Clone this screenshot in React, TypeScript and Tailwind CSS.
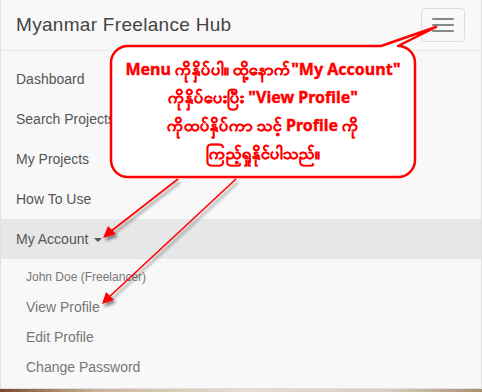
const navItems = ["Dashboard", "Search Projects", "My Projects", "How To Use"];
const accountItems = ["View Profile", "Edit Profile", "Change Password"];

function Callout() {
  return (
    <div className="pointer-events-none absolute inset-0">
      <svg width="482" height="392" className="absolute left-0 top-0">
        <defs>
          <filter id="shadow" x="-20%" y="-20%" width="140%" height="140%">
            <feDropShadow dx="2" dy="3" stdDeviation="1.5" floodColor="#000" floodOpacity="0.45" />
          </filter>
        </defs>
        <path
          d="M128 46 H381 L436 27 L398 46 A17 17 0 0 1 415 63 V160 A17 17 0 0 1 398 177 H128 A17 17 0 0 1 111 160 V63 A17 17 0 0 1 128 46 Z"
          fill="#fff"
          stroke="#f00"
          strokeWidth="2.5"
          strokeLinejoin="round"
        />
        <g filter="url(#shadow)" stroke="#f00" strokeWidth="1.6" fill="#f00">
          <line x1="178" y1="179" x2="110" y2="232" />
          <polygon points="103,238 108,226 116,234" stroke="none" />
          <line x1="236" y1="179" x2="108" y2="298" />
          <polygon points="102,304 106,292 114,300" stroke="none" />
        </g>
      </svg>
      <div className="absolute left-[111px] top-[55px] flex w-[304px] flex-col items-center font-['Noto_Sans','DejaVu_Sans',sans-serif] text-[16px] font-bold leading-[28px] text-[#f00] [-webkit-text-stroke:0.4px_#f00]">
        <p>Menu ကိုနှိပ်ပါ။ ထို့နောက်"My Account"</p>
        <p>ကိုနှိပ်ပေးပြီး "View Profile"</p>
        <p>ကိုထပ်နှိပ်ကာ သင့် Profile ကို</p>
        <p>ကြည့်ရှုနိုင်ပါသည်။</p>
      </div>
    </div>
  );
}

export default function App() {
  return (
    <div className="relative flex h-[392px] w-[482px] flex-col overflow-hidden bg-[#f8f8f8] font-['Liberation_Sans',Arial,sans-serif]">
      <div className="flex flex-1 flex-col border-b border-r border-l border-[#e0e0e0]">
        <header className="flex h-[51px] shrink-0 items-center justify-between border-b border-[#e7e7e7] pl-[15px] pr-4">
          <span className="text-[19px] tracking-[0.3px] text-[#444]">Myanmar Freelance Hub</span>
          <button className="flex h-[34px] w-[44px] flex-col items-center justify-center gap-[4px] rounded border border-[#ddd]">
            <span className="h-[2px] w-[22px] rounded-sm bg-[#888]" />
            <span className="h-[2px] w-[22px] rounded-sm bg-[#888]" />
            <span className="h-[2px] w-[22px] rounded-sm bg-[#888]" />
          </button>
        </header>
        <ul className="pt-[8px] text-[14px] text-[#555]">
          {navItems.map((item) => (
            <li key={item} className="flex h-10 items-center px-[15px]">
              {item}
            </li>
          ))}
          <li className="flex h-10 items-center gap-[6px] bg-[#e7e7e7] px-[15px]">
            My Account
            <span className="mt-[2px] h-0 w-0 border-l-[4px] border-r-[4px] border-t-[4px] border-l-transparent border-r-transparent border-t-[#555]" />
          </li>
        </ul>
        <ul className="pt-[3px] text-[14px] text-[#777]">
          <li className="flex h-[30px] items-center pl-[25px] text-[12px]">John Doe (Freelancer)</li>
          {accountItems.map((item) => (
            <li key={item} className="flex h-[30px] items-center pl-[25px]">
              {item}
            </li>
          ))}
        </ul>
      </div>
      <div className="h-[3px] shrink-0 bg-[linear-gradient(90deg,#7a4a2a,#c9b49a_20%,#e5ddd0_50%,#d9cfc0_80%,#a88f70)]" />
      <Callout />
    </div>
  );
}
